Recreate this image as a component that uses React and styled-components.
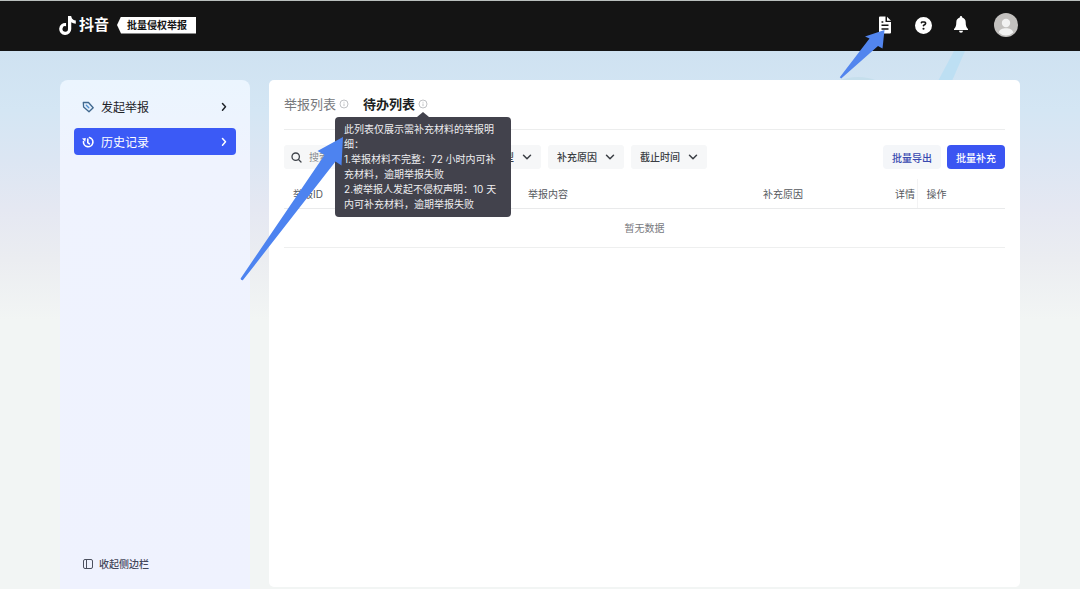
import { useState } from "react";
import styled, { createGlobalStyle, css } from "styled-components";
import { FaCircleQuestion, FaTiktok } from "react-icons/fa6";

const FILTERS = [
  { id: "type", label: "举报类型", options: ["著作权", "商标权"] },
  { id: "reason", label: "补充原因", options: ["材料缺失", "对方声明"] },
  { id: "deadline", label: "截止时间", options: ["三天以内", "十天以内"] },
];

const COLUMNS = ["举报ID", "举报内容", "补充原因", "详情", "操作"];

const TIP_LINES = [
  "此列表仅展示需补充材料的举报明",
  "细：",
  "1.举报材料不完整：72 小时内可补",
  "充材料，逾期举报失败",
  "2.被举报人发起不侵权声明：10 天",
  "内可补充材料，逾期举报失败",
];

export default function App() {
  const [tab, setTab] = useState("todo");

  return (
    <Page>
      <GlobalStyle />
      <Header>
        <Brand href="#home">
          <FaTiktok size={19} />
          <BrandName>抖音</BrandName>
          <BrandTag>批量侵权举报</BrandTag>
        </Brand>
        <HeaderActions>
          <IconButton aria-label="文档">
            <DocIcon />
            <ShortArrow />
          </IconButton>
          <IconButton aria-label="帮助">
            <FaCircleQuestion size={17} />
          </IconButton>
          <IconButton aria-label="通知">
            <BellIcon />
          </IconButton>
          <AvatarButton aria-label="账号">
            <AvatarIcon />
          </AvatarButton>
        </HeaderActions>
      </Header>
      <Backdrop />
      <Content>
        <Sidebar>
          <Menu>
            <MenuItem href="#new">
              <TagIcon />
              <MenuText>发起举报</MenuText>
              <Chevron direction="right" />
            </MenuItem>
            <MenuItem href="#history" $active>
              <HistoryIcon />
              <MenuText>历史记录</MenuText>
              <Chevron direction="right" />
            </MenuItem>
          </Menu>
          <CollapseButton>
            <PanelIcon />
            收起侧边栏
          </CollapseButton>
        </Sidebar>
        <Main>
          <TabBar>
            <TabGroup>
              <Tab $active={tab === "all"} onClick={() => setTab("all")}>
                举报列表
              </Tab>
              <InfoIcon />
            </TabGroup>
            <TabGroup>
              <Tab $active={tab === "todo"} onClick={() => setTab("todo")}>
                待办列表
              </Tab>
              <TipAnchor>
                <InfoIcon />
                <Tooltip role="tooltip">
                  {TIP_LINES.map((line) => (
                    <TipLine key={line}>{line}</TipLine>
                  ))}
                  <LongArrow />
                </Tooltip>
              </TipAnchor>
            </TabGroup>
          </TabBar>
          <Toolbar>
            <SearchBox>
              <SearchIcon />
              <SearchInput aria-label="搜索" placeholder="搜索举报ID" />
            </SearchBox>
            {FILTERS.map((filter) => (
              <FilterBox key={filter.id}>
                <FilterSelect aria-label={filter.label} defaultValue="">
                  <option value="">{filter.label}</option>
                  {filter.options.map((option) => (
                    <option key={option}>{option}</option>
                  ))}
                </FilterSelect>
                <Chevron direction="down" />
              </FilterBox>
            ))}
            <ToolbarActions>
              <ActionButton>批量导出</ActionButton>
              <ActionButton $primary>批量补充</ActionButton>
            </ToolbarActions>
          </Toolbar>
          <Table>
            <colgroup>
              <Column $width="32.6%" />
              <Column $width="32.6%" />
              <Column $width="18.3%" />
              <Column $width="4.3%" />
              <Column $width="12.2%" />
            </colgroup>
            <thead>
              <tr>
                {COLUMNS.map((name) => (
                  <HeadCell key={name} $divided={name === "操作"}>
                    {name}
                  </HeadCell>
                ))}
              </tr>
            </thead>
            <tbody>
              <tr>
                <EmptyCell colSpan={COLUMNS.length}>暂无数据</EmptyCell>
              </tr>
            </tbody>
          </Table>
        </Main>
      </Content>
    </Page>
  );
}

function DocIcon() {
  return (
    <svg width="18" height="18" viewBox="0 0 18 18">
      <path
        d="M4 .5h5.500V6H15v10.500a1 1 0 0 1-1 1H4a1 1 0 0 1-1-1v-15a1 1 0 0 1 1-1z"
        fill="#fff"
      />
      <path d="M11 .8 15 4.800h-4z" fill="#fff" />
      <path d="M5.500 6h1.800M5.500 9.300h7M5.500 13h7" stroke="#141414" strokeWidth="1.4" />
    </svg>
  );
}

function BellIcon() {
  return (
    <svg width="18" height="18" viewBox="0 0 18 18" fill="#fff">
      <path d="M9 0a1.200 1.200 0 0 1 1.200 1.200v.3c2.200.6 3.500 2.400 3.500 4.700 0 3.200.6 5.200 2.300 6.800v1H2v-1c1.700-1.600 2.300-3.600 2.300-6.800 0-2.300 1.300-4.100 3.500-4.700v-.3A1.200 1.200 0 0 1 9 0z" />
      <path d="M7 14.800h4a2 2 0 0 1-4 0z" />
    </svg>
  );
}

function AvatarIcon() {
  return (
    <svg width="24" height="24" viewBox="0 0 24 24">
      <circle cx="12" cy="12" r="12" fill="#c2c0be" />
      <circle cx="12" cy="10" r="4.2" fill="#f2f2f2" />
      <path d="M4.700 19.600c.8-3 3.800-4.300 7.300-4.300s6.500 1.300 7.300 4.300a10.500 10.500 0 0 1-14.600 0z" fill="#f2f2f2" />
    </svg>
  );
}

function TagIcon() {
  return (
    <svg width="12" height="12" viewBox="0 0 12 12" fill="none" stroke="#41698f" strokeWidth="1.3" strokeLinejoin="round">
      <path d="M1.300 1.500h5.200l4.700 5.200L7 10.800 1.600 6z" fill="#e2eefb" />
      <path d="m4.300 4.200 2.500 2.600" stroke="#4f8fd0" strokeLinecap="round" />
    </svg>
  );
}

function HistoryIcon() {
  return (
    <svg width="12" height="12" viewBox="0 0 12 12" fill="none" stroke="#fff" strokeWidth="1.6" strokeLinecap="round">
      <path d="M7.500 1.500A4.700 4.700 0 1 1 1.500 5.500" />
      <path d="M5.800 3v3.600l1.600 1.200" />
      <path d="M0 2.600 3.800 2 3.300 5.800z" fill="#fff" stroke="none" />
    </svg>
  );
}

function PanelIcon() {
  return (
    <svg width="10" height="10" viewBox="0 0 10 10" fill="none" stroke="#4b4f5e">
      <rect x="0.5" y="0.5" width="9" height="9" rx="1.5" />
      <path d="M3.500.5v9" />
    </svg>
  );
}

function SearchIcon() {
  return (
    <svg width="11" height="11" viewBox="0 0 11 11" fill="none" stroke="#3f434a" strokeWidth="1.3" strokeLinecap="round">
      <circle cx="4.700" cy="4.700" r="3.700" />
      <path d="m7.500 7.500 2.500 2.500" />
    </svg>
  );
}

function InfoIcon() {
  return (
    <svg width="10" height="10" viewBox="0 0 10 10" fill="none" stroke="#b0b2b6" strokeWidth="0.8">
      <circle cx="5" cy="5" r="4" />
      <path d="M5 2.800v.9M5 4.500v2.600" />
    </svg>
  );
}

function Chevron({ direction }) {
  return (
    <svg width="10" height="10" viewBox="0 0 10 10" fill="none" stroke="currentColor" strokeWidth="1.500" strokeLinecap="round" strokeLinejoin="round">
      <path d={direction === "down" ? "M1.500 3.300 5 6.800l3.500-3.500" : "M3.500 1.500 6.500 4.800 3.500 8.200"} />
    </svg>
  );
}

function ShortArrow() {
  return (
    <ShortArrowSvg width="46" height="50" viewBox="0 0 46 50">
      <path d="M45.500 0 26 6.500l4.500 2L.8 47.300l1.400 1.200L39 16l4.500 2.500z" fill="#5285ee" />
    </ShortArrowSvg>
  );
}

function LongArrow() {
  return (
    <LongArrowSvg width="104" height="146" viewBox="0 0 104 146">
      <path d="M103 1 77.500 15l7 4L.6 142.500q0 2 2.200 1.800L95.500 25.500l6 4z" fill="#4d83f0" />
    </LongArrowSvg>
  );
}

function Backdrop() {
  return (
    <BackdropSvg width="300" height="260" viewBox="0 0 300 260">
      <path d="M174 0h11l-13 30h-14z" fill="#bddff3" />
      <ellipse cx="78" cy="38" rx="26" ry="12" fill="#c6dfec" />
    </BackdropSvg>
  );
}

const GlobalStyle = createGlobalStyle`
  * {
    box-sizing: border-box;
  }

  body {
    margin: 0;
    font-family: Inter, "Noto Sans CJK SC", sans-serif;
    font-size: 10px;
    color: #1f2329;
  }

  button, input, select {
    margin: 0;
    padding: 0;
    border: none;
    background: none;
    font: inherit;
    color: inherit;
  }

  button {
    cursor: pointer;
  }

  svg {
    display: block;
    flex: none;
  }
`;

const Page = styled.div`
  position: relative;
  display: flex;
  flex-direction: column;
  min-height: 100vh;
  background: linear-gradient(
    #cfe2f1 51px,
    #d4e6f4 110px,
    #dce6f3 160px,
    #e5e8f2 210px,
    #ebedf1 260px,
    #f2f5f4 320px
  );
`;

const Header = styled.header`
  position: relative;
  z-index: 2;
  display: flex;
  align-items: center;
  justify-content: space-between;
  height: 51px;
  padding: 0 62px 2px 58px;
  border-top: 1px solid #b9bfbd;
  background-color: #141414;
  color: #fff;
`;

const Brand = styled.a`
  display: flex;
  align-items: center;
  color: inherit;
  text-decoration: none;
`;

const BrandName = styled.span`
  margin: 0 8px 0 2px;
  font-size: 15px;
  font-weight: 700;
  line-height: 20px;
`;

const BrandTag = styled.span`
  padding: 0 9px 0 10px;
  background-color: #fff;
  color: #141414;
  font-weight: 700;
  line-height: 17px;
  clip-path: polygon(4px 0, 100% 0, 100% 100%, 4px 100%, 0 50%);
`;

const HeaderActions = styled.div`
  display: flex;
  align-items: center;
  gap: 20px;
`;

const IconButton = styled.button`
  position: relative;
  display: grid;
  place-items: center;
  width: 18px;
  height: 18px;
`;

const AvatarButton = styled(IconButton)`
  width: 24px;
  height: 24px;
  margin-left: 4px;
`;

const ShortArrowSvg = styled.svg`
  position: absolute;
  top: 14px;
  right: 9px;
`;

const BackdropSvg = styled.svg`
  position: absolute;
  top: 51px;
  right: 0;
`;

const Content = styled.div`
  position: relative;
  flex: 1;
  display: grid;
  grid-template-columns: 190px 1fr;
  gap: 19px;
  padding: 29px 60px 0;
`;

const Sidebar = styled.aside`
  display: flex;
  flex-direction: column;
  justify-content: space-between;
  padding: 13px 14px 16px;
  border-radius: 8px 8px 0 0;
  background: linear-gradient(#ebf5fe, #eff3fe 80px, #eff2fe);
`;

const Menu = styled.nav`
  display: flex;
  flex-direction: column;
  gap: 8px;
`;

const MenuItem = styled.a`
  display: flex;
  align-items: center;
  gap: 7px;
  height: 27px;
  padding: 0 7px 0 8px;
  border-radius: 4px;
  font-size: 12px;
  text-decoration: none;
  color: #1f2329;

  ${({ $active }) =>
    $active &&
    css`
      background-color: #3b5af6;
      color: #fff;
    `}
`;

const MenuText = styled.span`
  flex: 1;
`;

const CollapseButton = styled.button`
  display: flex;
  align-items: center;
  align-self: flex-start;
  gap: 6px;
  padding: 0 9px;
  font-weight: 500;
  line-height: 18px;
  color: #43465a;
`;

const Main = styled.main`
  margin-bottom: 2px;
  padding: 0 15px;
  border-radius: 5px;
  background-color: #fff;
`;

const TabBar = styled.div`
  display: flex;
  align-items: center;
  gap: 14px;
  height: 50px;
  padding-bottom: 1px;
  border-bottom: 1px solid #eceded;
`;

const TabGroup = styled.div`
  display: flex;
  align-items: center;
  gap: 3px;
`;

const Tab = styled.button`
  font-size: 13px;
  line-height: 20px;
  font-weight: ${({ $active }) => ($active ? 700 : 400)};
  color: ${({ $active }) => ($active ? "#1c1f23" : "#77797d")};
`;

const TipAnchor = styled.span`
  position: relative;
`;

const Tooltip = styled.div`
  position: absolute;
  z-index: 1;
  top: 18px;
  left: 50%;
  width: 176px;
  margin-left: -88px;
  padding: 5px 9px;
  border-radius: 4px;
  background-color: #42424c;
  color: #eeeef0;
  line-height: 15px;
  white-space: nowrap;

  &::before {
    content: "";
    position: absolute;
    top: -5px;
    left: 50%;
    margin-left: -6px;
    border: 6px solid transparent;
    border-top: none;
    border-bottom: 5px solid #42424c;
  }
`;

const TipLine = styled.div``;

const LongArrowSvg = styled.svg`
  position: absolute;
  top: 19px;
  right: 167px;
`;

const Toolbar = styled.div`
  display: flex;
  align-items: center;
  gap: 7px;
  margin: 15px 0 10px;
`;

const SearchBox = styled.label`
  display: flex;
  align-items: center;
  gap: 7px;
  width: 174px;
  height: 24px;
  padding: 0 7px;
  border-radius: 3px;
  background-color: #f6f7f8;
`;

const SearchInput = styled.input`
  flex: 1;
  min-width: 0;
  outline: none;

  &::placeholder {
    color: #8a8d92;
  }
`;

const FilterBox = styled.span`
  display: grid;
  grid-template-columns: 1fr 10px;
  align-items: center;
  height: 24px;
  padding-right: 9px;
  border-radius: 3px;
  background-color: #f6f7f8;
  color: #3a3e44;

  svg {
    grid-area: 1 / 2;
    pointer-events: none;
  }
`;

const FilterSelect = styled.select`
  grid-area: 1 / 1 / 2 / 3;
  height: 24px;
  padding: 0 18px 0 9px;
  appearance: none;
  outline: none;
  font-weight: 500;
  cursor: pointer;
`;

const ToolbarActions = styled.div`
  display: flex;
  gap: 6px;
  margin-left: auto;
`;

const ActionButton = styled.button`
  height: 24px;
  padding: 0 9px;
  border-radius: 4px;
  font-weight: 500;
  background-color: ${({ $primary }) => ($primary ? "#3b55f2" : "#f4f6f9")};
  color: ${({ $primary }) => ($primary ? "#fff" : "#3849b0")};
`;

const Table = styled.table`
  width: 100%;
  table-layout: fixed;
  border-collapse: collapse;
`;

const Column = styled.col`
  width: ${({ $width }) => $width};
`;

const HeadCell = styled.th`
  height: 29px;
  padding: 0 0 0 9px;
  border-bottom: 1px solid #e9eaeb;
  border-left: ${({ $divided }) => ($divided ? "1px solid #f3f3f4" : "none")};
  text-align: left;
  font-weight: 400;
  color: #55585d;
`;

const EmptyCell = styled.td`
  height: 39px;
  padding: 0;
  border-bottom: 1px solid #eeefef;
  text-align: center;
  color: #77797d;
`;
